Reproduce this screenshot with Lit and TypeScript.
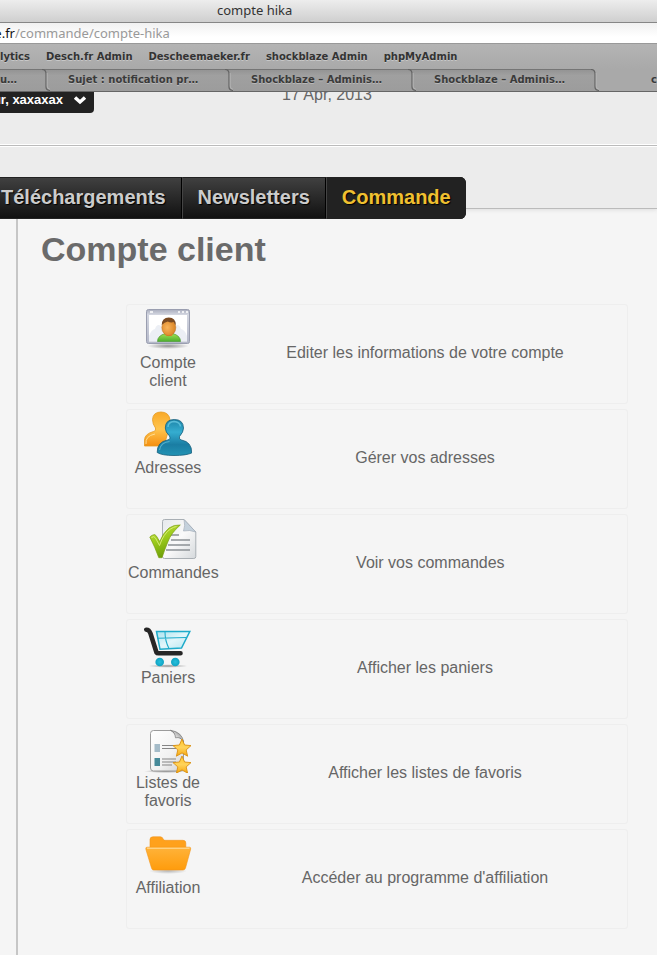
import { LitElement, html, css, svg } from "lit";
import { customElement } from "lit/decorators.js";

const STAR =
  "M0 -9L2.6 -3L9 -2.4L4.2 1.9L5.6 8.2L0 4.9L-5.6 8.2L-4.2 1.9L-9 -2.4L-2.6 -3Z";

const accountIcon = svg`
  <defs>
    <linearGradient id="frame" x1="0" y1="0" x2="0" y2="1"><stop offset="0" stop-color="#a9adbd"/><stop offset=".15" stop-color="#d3d6e0"/><stop offset="1" stop-color="#b4b8c9"/></linearGradient>
    <radialGradient id="face" cx=".4" cy=".5" r=".6"><stop offset="0" stop-color="#f9b45c"/><stop offset="1" stop-color="#d98324"/></radialGradient>
    <linearGradient id="shirt" x1="0" y1="0" x2="0" y2="1"><stop offset="0" stop-color="#a3e052"/><stop offset="1" stop-color="#4caf2e"/></linearGradient>
    <radialGradient id="shade1"><stop offset="0" stop-color="#000" stop-opacity=".4"/><stop offset="1" stop-color="#000" stop-opacity="0"/></radialGradient>
  </defs>
  <ellipse cx="24" cy="41" rx="21" ry="3" fill="url(#shade1)"/>
  <rect x="2.500" y="4.500" width="43" height="34" rx="2" fill="url(#frame)" stroke="#9a9eb0"/>
  <path d="M6 7h3M34 7h2M38 7h2M42 7h2" stroke="#fff" stroke-width="1.500"/>
  <rect x="5" y="10" width="38" height="26.500" fill="#fff"/>
  <path d="M5 31q2-6 6-7q2-6 6-3l4 15H5zM43 31q-2-6-6-7q-2-6-6-3l-4 15h16z" fill="#eceff5"/>
  <path d="M13.500 36.500q0-6 8-8h7q8 2 8 8z" fill="url(#shirt)" stroke="#3c8f25" stroke-width=".6"/>
  <path d="M21 28q4 3.500 8 0l-1 3h-6z" fill="#e39335"/>
  <ellipse cx="24.800" cy="22.500" rx="7" ry="8.200" fill="url(#face)" stroke="#b56a20" stroke-width=".5"/>
  <path d="M17.800 20q0-7.500 7-7.500t7 7.500q-1.500-1-2-3q-3 1-6-.5q-3.500 .5-6 3.500z" fill="#7a4a22"/>`;

const addressIcon = svg`
  <defs>
    <linearGradient id="orange" x1="0" y1="0" x2="0" y2="1"><stop offset="0" stop-color="#f9a928"/><stop offset=".5" stop-color="#ffc54e"/><stop offset="1" stop-color="#f58f10"/></linearGradient>
    <linearGradient id="blue" x1="0" y1="0" x2="0" y2="1"><stop offset="0" stop-color="#1d84a8"/><stop offset=".35" stop-color="#35add0"/><stop offset=".7" stop-color="#1a7da3"/><stop offset="1" stop-color="#2393b4"/></linearGradient>
  </defs>
  <path d="M.5 36V30q0-6 9-8.500q3-.5 2-3.500Q8.500 14 8.500 9.500Q9 2 17 2t9 8q0 4-3 8q-1 3 1 4l-4 14z" fill="url(#orange)" stroke="#e59a22" stroke-width=".8"/>
  <path d="M2 34q-1-8 9-10" fill="none" stroke="#ffdd92" stroke-width="1"/>
  <path d="M13.200 42.500Q13 32 23.500 30q3.500-.5 2-4Q21.300 22 21.300 18q0-8.500 9-8.500t9.200 8.500q0 4-4 8.500q-1 3 2 3.500Q48 32 47.700 43Q42 45.500 30 45.500t-16.800-3z" fill="url(#blue)" stroke="#145d7b" stroke-width=".8"/>
  <path d="M24 17q0-5 6-5.500q6 .5 6.500 5" fill="none" stroke="#71d0e8" stroke-width="1.500" opacity=".7"/>
  <path d="M15.500 40q1-7.500 10-8.500" fill="none" stroke="#69c4dc" stroke-width="1.200" opacity=".7"/>`;

const ordersIcon = svg`
  <defs>
    <linearGradient id="paper" x1="0" y1="0" x2="1" y2="1"><stop offset="0" stop-color="#e6e9ec"/><stop offset=".5" stop-color="#fafafa"/><stop offset="1" stop-color="#d5d9dc"/></linearGradient>
    <linearGradient id="check" x1="0" y1="0" x2=".4" y2="1"><stop offset="0" stop-color="#c3e141"/><stop offset=".5" stop-color="#9ccb1c"/><stop offset="1" stop-color="#6c9e08"/></linearGradient>
  </defs>
  <path d="M15.500 4.500H35L46.800 17V41.500q0 2-2 2H15.500q-2 0-2-2V6.500q0-2 2-2z" fill="url(#paper)" stroke="#a9afb4"/>
  <path d="M35 4.500q1.500 6-.5 11.500q6-1.500 12.300 1z" fill="#c4d1dc" stroke="#a3aeb9" stroke-width=".7"/>
  <path d="M22 20h8M22 25h19M19 30h22M17 35h24" stroke="#8c9195" stroke-width="1.600"/>
  <path d="M.8 22Q2.500 20 5.500 19.500Q7 20 8 22L10.700 26.500Q14 18 20 13Q25 9.500 31.300 10Q22 18 18.800 27Q15.500 35 13 42.700H9.800Q6 32 .8 22z" fill="url(#check)" stroke="#7b9f12" stroke-width=".7"/>
  <path d="M2.500 22.500q2.500-2 4 .5l4 7.500q4-12 11-16.500q3-2 6-2.500" fill="none" stroke="#e2f18b" stroke-width="1" opacity=".8"/>`;

const cartIcon = svg`
  <defs>
    <linearGradient id="basket" x1="0" y1="0" x2="1" y2="1"><stop offset="0" stop-color="#a8e3ef"/><stop offset=".5" stop-color="#e3f6fa"/><stop offset="1" stop-color="#b4e6f0"/></linearGradient>
    <radialGradient id="wheel"><stop offset="0" stop-color="#27c0dc"/><stop offset="1" stop-color="#10a2c2"/></radialGradient>
    <radialGradient id="shade4"><stop offset="0" stop-color="#000" stop-opacity=".4"/><stop offset="1" stop-color="#000" stop-opacity="0"/></radialGradient>
  </defs>
  <ellipse cx="24" cy="46" rx="20" ry="1.800" fill="url(#shade4)"/>
  <path d="M12.500 11.500H45.800L37.500 28L16 29.300z" fill="url(#basket)" stroke="#1eabca" stroke-width="1.500"/>
  <path d="M13.500 18.300L42.500 17.500M21 12q0 9 4 16.500" fill="none" stroke="#1eabca" stroke-width="1.100"/>
  <path d="M2.300 9.700Q5 9.500 6.500 13.500L12.500 32.500Q13 33.300 14.500 33.300H36.500" fill="none" stroke="#262626" stroke-width="4.600" stroke-linecap="round" stroke-linejoin="round"/>
  <circle cx="15.700" cy="42" r="4.300" fill="url(#wheel)"/>
  <circle cx="31.300" cy="42" r="4.300" fill="url(#wheel)"/>`;

const wishlistIcon = svg`
  <defs>
    <linearGradient id="sheet" x1="0" y1="0" x2="1" y2="1"><stop offset="0" stop-color="#fff"/><stop offset=".6" stop-color="#f1f1f1"/><stop offset="1" stop-color="#d2d2d2"/></linearGradient>
    <linearGradient id="curl" x1="0" y1="1" x2="1" y2="0"><stop offset="0" stop-color="#fff"/><stop offset=".5" stop-color="#d0d0d0"/><stop offset="1" stop-color="#666"/></linearGradient>
    <linearGradient id="star" x1="0" y1="0" x2="0" y2="1"><stop offset="0" stop-color="#ffc62c"/><stop offset=".5" stop-color="#ffd35a"/><stop offset="1" stop-color="#f8a70d"/></linearGradient>
    <radialGradient id="shade5"><stop offset="0" stop-color="#000" stop-opacity=".4"/><stop offset="1" stop-color="#000" stop-opacity="0"/></radialGradient>
  </defs>
  <ellipse cx="22" cy="46.300" rx="22" ry="1.700" fill="url(#shade5)"/>
  <path d="M9.500 5.500H27L39.500 16V43q0 3-3 3H9.500q-3 0-3-3V8.500q0-3 3-3z" fill="url(#sheet)" stroke="#9b9b9b"/>
  <path d="M26.500 5.300Q31 7 31.500 12.800Q37 11.500 39.700 17Q38 7 26.500 5.300z" fill="url(#curl)" stroke="#777" stroke-width=".7"/>
  <rect x="10.500" y="19" width="5.500" height="8" fill="#a4bbc8"/>
  <rect x="10.500" y="33" width="5.500" height="8" fill="#468a99"/>
  <path d="M18 20.500h14M18 23.500h14M18 34h14M18 37h14M18 40h10" stroke="#858585" stroke-width="1"/>
  <path d=${STAR} transform="translate(38 23)" fill="url(#star)" stroke="#d99012" stroke-width=".9" stroke-linejoin="round"/>
  <path d=${STAR} transform="translate(38 40)" fill="url(#star)" stroke="#d99012" stroke-width=".9" stroke-linejoin="round"/>`;

const folderIcon = svg`
  <defs>
    <linearGradient id="front" x1="0" y1="0" x2="0" y2="1"><stop offset="0" stop-color="#ffb33a"/><stop offset="1" stop-color="#ff9c0c"/></linearGradient>
    <radialGradient id="shade6"><stop offset="0" stop-color="#000" stop-opacity=".25"/><stop offset="1" stop-color="#000" stop-opacity="0"/></radialGradient>
  </defs>
  <ellipse cx="24" cy="41" rx="19" ry="3" fill="url(#shade6)"/>
  <path d="M6 20V9.500Q6 6.800 9 6.800H16.500Q18.500 6.800 19.500 9.500Q20 10.300 21.500 10.300H39Q41.800 10.300 41.800 13V20z" fill="#ffa11c" stroke="#f0941a" stroke-width=".6"/>
  <path d="M3 17.200H45.500Q47 17.200 46.700 19L41.500 38Q41 40 39 40H9.500Q8 40 7.500 38L1.800 19Q1.500 17.200 3 17.200z" fill="url(#front)" stroke="#f3961a" stroke-width=".6"/>
  <path d="M3 18.200H45.500" stroke="#ffe0a3" stroke-width="1"/>`;

const ENTRIES = [
  { label: "Compte client", text: "Editer les informations de votre compte", icon: accountIcon },
  { label: "Adresses", text: "Gérer vos adresses", icon: addressIcon },
  { label: "Commandes", text: "Voir vos commandes", icon: ordersIcon },
  { label: "Paniers", text: "Afficher les paniers", icon: cartIcon },
  { label: "Listes de favoris", text: "Afficher les listes de favoris", icon: wishlistIcon },
  { label: "Affiliation", text: "Accéder au programme d'affiliation", icon: folderIcon },
];

@customElement("browser-chrome")
class BrowserChrome extends LitElement {
  static styles = css`
    :host {
      display: block;
      position: relative;
      z-index: 2;
      font-family: "Noto Sans", "Open Sans", sans-serif;
      color: #3a3a3a;
    }
    .title {
      height: 22px;
      line-height: 20px;
      padding-left: 217px;
      font-size: 13px;
      color: #333;
      background: linear-gradient(#ededed, #cfcfcf);
      border-bottom: 1px solid #868686;
      white-space: nowrap;
    }
    .address {
      display: flex;
      align-items: center;
      height: 20px;
      overflow: hidden;
      font-size: 13px;
      background: linear-gradient(#f1f1f1, #fff 70%);
      border-bottom: 1px solid #999;
    }
    .host {
      flex: none;
      display: flex;
      justify-content: flex-end;
      width: 15px;
      color: #111;
    }
    .path {
      flex: 1;
      min-width: 0;
      height: 20px;
      padding: 0;
      border: 0;
      outline: 0;
      background: none;
      font: inherit;
      color: #999;
    }
    .bookmarks {
      display: flex;
      gap: 16px;
      height: 25px;
      line-height: 26px;
      overflow: hidden;
      background: linear-gradient(#b4b4b4, #a9a9a9);
      font-family: "DejaVu Sans", sans-serif;
      font-size: 10px;
      font-weight: 700;
      white-space: nowrap;
    }
    .bookmarks a {
      color: #333;
      text-decoration: none;
      text-shadow: 0 1px 0 #c8c8c8;
    }
    .bookmarks a:first-child {
      flex: none;
      display: flex;
      justify-content: flex-end;
      width: 30px;
    }
    .tabs {
      display: flex;
      height: 22px;
      overflow: hidden;
      background: #a9a9a9;
      border-bottom: 1px solid #666;
    }
    .tab {
      flex: none;
      display: flex;
      width: 183px;
      height: 22px;
      padding: 0 0 0 18px;
      border: 0;
      background: linear-gradient(#929292, #a0a0a0 30%, #9c9c9c);
      font: 700 10px/22px "DejaVu Sans", sans-serif;
      color: #3a3a3a;
      text-align: left;
      text-shadow: 0 1px 0 #b8b8b8;
      white-space: nowrap;
      box-shadow: inset 0 1px 0 #757575;
    }
    .tab span {
      flex: 1;
    }
    .tab svg {
      flex: none;
      width: 8px;
      height: 22px;
    }
    .first {
      width: 50px;
      padding-left: 0;
    }
    .first span {
      flex: none;
      display: flex;
      justify-content: flex-end;
      width: 17px;
      margin-right: 25px;
    }
    .current {
      width: auto;
      flex: 1;
      padding-left: 52px;
      background: none;
      box-shadow: none;
    }
  `;

  private edge(last = false) {
    return html`<svg viewBox="0 0 8 22" aria-hidden="true">
      ${last ? svg`<path d="M0 0Q4 1 4 5V18Q4 21 8 22V0z" fill="#a9a9a9"/>` : ""}
      <path d="M0 .5Q4 .5 4 5V18Q4 21 8 21.500" fill="none" stroke="#646464" stroke-width="1.200"/>
      <path d="M5.200 4V17Q5.200 20 8 20.300" fill="none" stroke="#b9b9b9" stroke-width=".8"/>
    </svg>`;
  }

  render() {
    return html`
      <div class="title">compte hika</div>
      <div class="address">
        <label class="host" for="path">e.fr</label>
        <input class="path" id="path" value="/commande/compte-hika" />
      </div>
      <nav class="bookmarks">
        <a href="#">lytics</a>
        <a href="#">Desch.fr Admin</a>
        <a href="#">Descheemaeker.fr</a>
        <a href="#">shockblaze Admin</a>
        <a href="#">phpMyAdmin</a>
      </nav>
      <div class="tabs">
        <button class="tab first"><span>u…</span>${this.edge()}</button>
        <button class="tab"><span>Sujet : notification pr…</span>${this.edge()}</button>
        <button class="tab"><span>Shockblaze – Adminis…</span>${this.edge()}</button>
        <button class="tab"><span>Shockblaze – Adminis…</span>${this.edge(true)}</button>
        <button class="tab current">c</button>
      </div>
    `;
  }
}

@customElement("site-header")
class SiteHeader extends LitElement {
  static styles = css`
    :host {
      display: block;
      position: relative;
      z-index: 1;
      background: #ececec;
      border-bottom: 1px solid #bbb;
      box-shadow: 0 1px 4px #ddd;
    }
    .top {
      display: flex;
      align-items: flex-start;
      height: 52px;
      border-bottom: 1px solid #fff;
    }
    .user {
      flex: none;
      display: flex;
      align-items: center;
      justify-content: flex-end;
      gap: 10px;
      box-sizing: border-box;
      width: 94px;
      height: 21px;
      padding: 0 7px 5px 0;
      overflow: hidden;
      border: 0;
      border-radius: 0 0 4px 0;
      background: #222;
      color: #fff;
      font: 700 13px/16px "Liberation Sans", Arial, sans-serif;
      white-space: nowrap;
    }
    .user svg {
      flex: none;
      width: 14px;
      height: 10px;
    }
    .date {
      margin: -6px 0 0 188px;
      font-size: 16px;
      line-height: 18px;
      color: #666;
    }
    .menu {
      display: flex;
      margin-bottom: -11px;
      padding-top: 31px;
      border-top: 1px solid #bbb;
      box-shadow: inset 0 1px 0 #fff;
    }
    .bar {
      display: flex;
      margin-left: -14px;
      border-radius: 0 6px 6px 0;
      overflow: hidden;
      background: #222;
    }
    .bar a {
      height: 40px;
      padding: 0 15px;
      border: solid #222;
      border-width: 1px 0;
      border-right: 2px groove #444;
      background: linear-gradient(#404040, #111);
      color: #ccc;
      font-size: 20px;
      font-weight: 700;
      line-height: 38px;
      text-decoration: none;
      text-shadow: 1px 1px 1px #000;
    }
    .bar .active {
      border-right: 0;
      background: #222;
      color: #f0c030;
    }
  `;

  render() {
    return html`
      <div class="top">
        <button class="user">
          <span>ur, xaxaxax</span>
          <svg viewBox="0 0 14 10" aria-hidden="true">
            <path d="M2 2.500L7 7L12 2.500" fill="none" stroke="#fff" stroke-width="3.500" />
          </svg>
        </button>
        <time class="date" datetime="2013-04-17">17 Apr, 2013</time>
      </div>
      <div class="menu">
        <nav class="bar">
          <a href="#">Téléchargements</a>
          <a href="#">Newsletters</a>
          <a class="active" href="#">Commande</a>
        </nav>
      </div>
    `;
  }
}

@customElement("app-root")
class AppRoot extends LitElement {
  static styles = css`
    :host {
      display: flex;
      flex-direction: column;
      min-height: 100vh;
      overflow: hidden;
      background: #f5f5f5;
      color: #666;
      font-family: "Liberation Sans", Arial, Helvetica, sans-serif;
    }
    main {
      flex: 1;
      margin-left: 16px;
      padding: 20px 29px 25px 23px;
      border-left: 2px solid #c6c6c6;
    }
    h1 {
      margin: 0 0 35px;
      font-size: 34px;
      line-height: 40px;
      font-weight: 700;
      color: #6a6a6a;
    }
    .list {
      display: flex;
      flex-direction: column;
      gap: 5px;
      margin: 0 0 0 85px;
      padding: 0;
      list-style: none;
    }
    .row {
      display: flex;
      gap: 14px;
      min-height: 98px;
      border: 1px solid #eee;
      border-radius: 3px;
      color: inherit;
      font-size: 16px;
      line-height: 18px;
      text-align: center;
      text-decoration: none;
    }
    .label {
      flex: 0 0 auto;
      display: flex;
      flex-direction: column;
      align-items: center;
      gap: 1px;
      box-sizing: border-box;
      min-width: 82px;
      padding: 0 1px;
    }
    .narrow {
      width: 82px;
    }
    .narrow span {
      width: 70px;
    }
    .label svg {
      width: 48px;
      height: 48px;
    }
    .text {
      flex: 1;
      align-self: center;
      padding-bottom: 2px;
    }
  `;

  render() {
    return html`
      <browser-chrome></browser-chrome>
      <site-header></site-header>
      <main>
        <h1>Compte client</h1>
        <ul class="list">
          ${ENTRIES.map(
            (entry) => html`<li>
              <a class="row" href="#">
                <span class="label ${entry.label.includes(" ") ? "narrow" : ""}">
                  <svg viewBox="0 0 48 48" aria-hidden="true">${entry.icon}</svg>
                  <span>${entry.label}</span>
                </span>
                <span class="text">${entry.text}</span>
              </a>
            </li>`
          )}
        </ul>
      </main>
    `;
  }
}
